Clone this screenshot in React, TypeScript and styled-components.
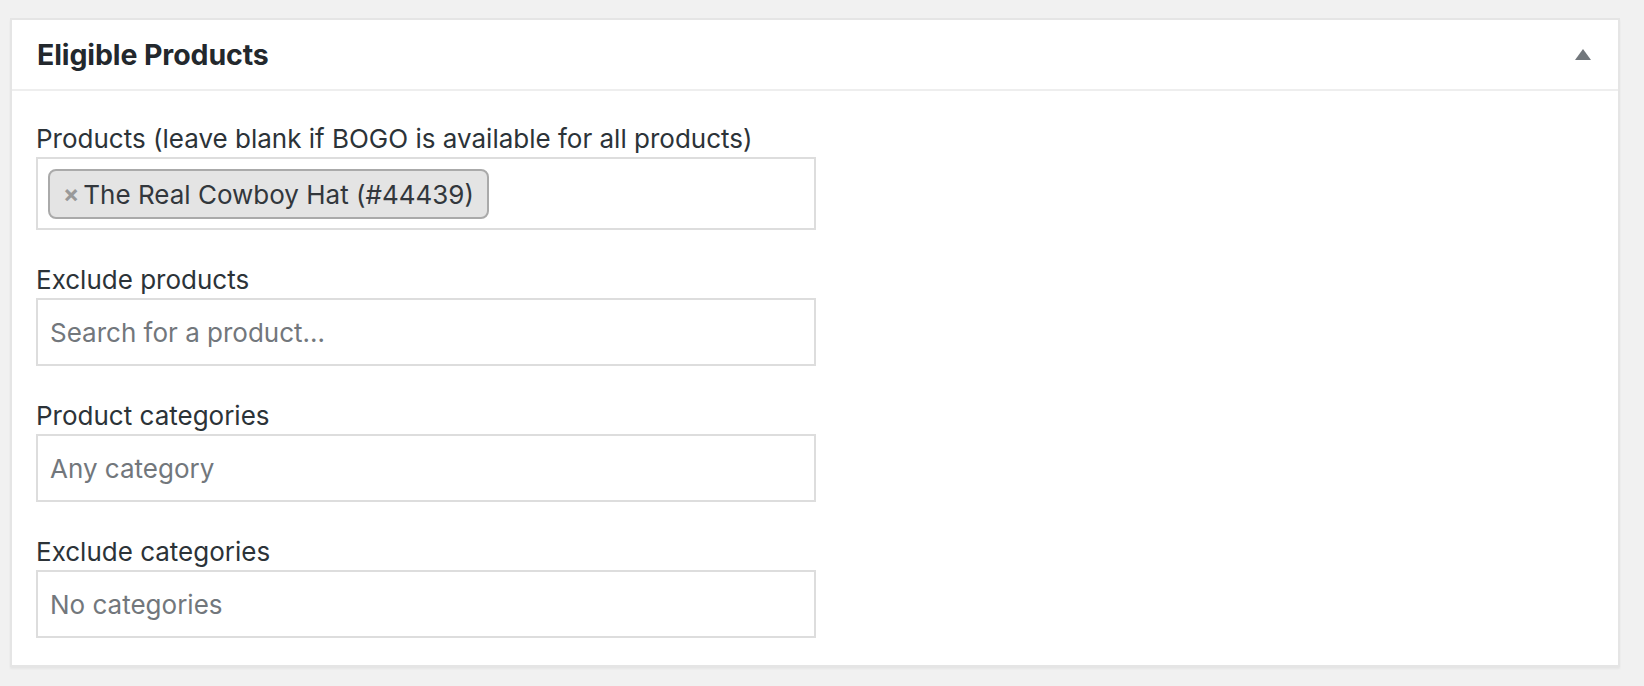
import React from 'react'
import styled, { createGlobalStyle } from 'styled-components'

const GlobalStyle = createGlobalStyle`
  html, body {
    margin: 0;
    background: #f1f1f1;
  }
  body {
    padding: 18px 24px 20px 10px;
    font-family: Inter, "Noto Sans", "Liberation Sans", sans-serif;
    color: #32373c;
  }
`

const Panel = styled.div`
  background: #fff;
  border: 2px solid #e5e5e5;
  box-shadow: 0 2px 2px rgba(0, 0, 0, 0.05);
`

const PanelHeader = styled.div`
  height: 69px;
  padding: 0 27px 0 25px;
  display: flex;
  align-items: center;
  justify-content: space-between;
  border-bottom: 2px solid #eeeeee;
`

const Title = styled.h2`
  margin: 0;
  font-size: 28.5px;
  font-weight: 700;
  color: #23282d;
  letter-spacing: -0.1px;
`

const ToggleBtn = styled.button`
  background: none;
  border: none;
  padding: 0;
  display: flex;
  cursor: pointer;
`

const PanelBody = styled.div`
  padding: 29px 24px 27px;
  display: flex;
  flex-direction: column;
  gap: 31px;
`

const Field = styled.div`
  display: flex;
  flex-direction: column;
`

const Label = styled.label`
  font-size: 26px;
  line-height: 37px;
  color: #2c3338;
`

const Box = styled.div<{ $chips?: boolean }>`
  width: 780px;
  box-sizing: border-box;
  min-height: 68px;
  border: 2px solid #dddddd;
  background: #fff;
  display: flex;
  align-items: center;
  padding: ${p => (p.$chips ? '10px 10px 9px' : '0 12px')};
`

const Placeholder = styled.span`
  font-size: 26px;
  color: #72777c;
`

const Chip = styled.span`
  display: inline-flex;
  align-items: center;
  height: 50px;
  box-sizing: border-box;
  padding: 0 13px;
  gap: 4px;
  background: #e4e4e4;
  border: 2px solid #aaaaaa;
  border-radius: 8px;
  font-size: 26px;
  color: #32373c;
`

const ChipRemove = styled.span`
  font-size: 24px;
  font-weight: 700;
  color: #999999;
  line-height: 1;
`

const fields = [
  { label: 'Exclude products', placeholder: 'Search for a product…' },
  { label: 'Product categories', placeholder: 'Any category' },
  { label: 'Exclude categories', placeholder: 'No categories' },
]

export default function App() {
  return (
    <>
      <GlobalStyle />
      <Panel>
        <PanelHeader>
          <Title>Eligible Products</Title>
          <ToggleBtn aria-label="Toggle panel">
            <svg width="16" height="11" viewBox="0 0 16 11">
              <polygon points="8,0 16,11 0,11" fill="#72777c" />
            </svg>
          </ToggleBtn>
        </PanelHeader>
        <PanelBody>
          <Field>
            <Label>Products (leave blank if BOGO is available for all products)</Label>
            <Box $chips>
              <Chip>
                <ChipRemove>×</ChipRemove>
                The Real Cowboy Hat (#44439)
              </Chip>
            </Box>
          </Field>
          {fields.map(f => (
            <Field key={f.label}>
              <Label>{f.label}</Label>
              <Box>
                <Placeholder>{f.placeholder}</Placeholder>
              </Box>
            </Field>
          ))}
        </PanelBody>
      </Panel>
    </>
  )
}
